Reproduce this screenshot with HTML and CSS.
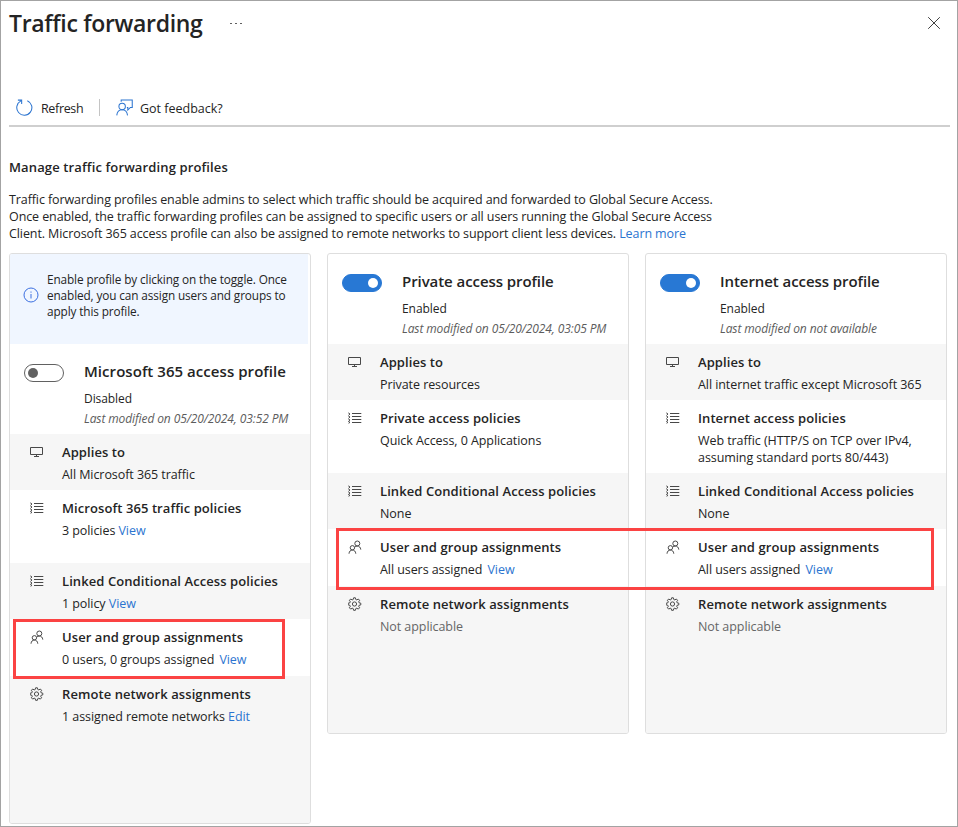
FILE: index.html
```
<!DOCTYPE html>
<html lang="en">
<head>
<meta charset="utf-8">
<title>Traffic forwarding</title>
<link rel="stylesheet" href="styles.css">
</head>
<body>
<svg class="sprite" aria-hidden="true">
  <symbol id="monitor" viewBox="0 0 14 14"><path d="M.5 2.500h12v7H.5zM6.500 10v1.500M4 11.500h5"/></symbol>
  <symbol id="list" viewBox="0 0 14 14"><path d="M4 2.500h9.300M4 5.500h9.300M4 8.500h9.300M4 11.500h9.300M.3 1.900l1.700 1.100L.6 4.200M.3 4.900L2 6 .6 7.200M.3 7.900L2 9 .6 10.200M.3 10.500L2 11.300.6 12.300"/></symbol>
  <symbol id="people" viewBox="0 0 14 14"><circle cx="4.400" cy="7.800" r="2.200"/><circle cx="9.300" cy="3.500" r="2.500"/><path d="M1 13.700c.2-2.300 1.500-3.700 3.400-3.700s3.200 1.400 3.400 3.700M6.800 7.100c.6-.7 1.500-1.100 2.500-1.100 1.900 0 3.300 1.400 3.500 3.600"/></symbol>
  <symbol id="gear" viewBox="0 0 14 14"><circle cx="6.500" cy="7" r="2.100"/><path d="M5.600.8h1.800l.4 1.700 1 .4 1.500-.9 1.300 1.300-.9 1.500.4 1 1.700.4v1.700l-1.700.4-.4 1 .9 1.500-1.300 1.300-1.500-.9-1 .4-.4 1.700H5.600l-.4-1.700-1-.4-1.500.9-1.300-1.300.9-1.500-.4-1-1.700-.4V6.200l1.700-.4.4-1-.9-1.500L2.700 2l1.500.9 1-.4z"/></symbol>
</svg>
<main class="blade">
  <header class="titlebar">
    <h1>Traffic forwarding</h1>
    <span class="more"><i></i><i></i><i></i></span>
    <svg class="close" viewBox="0 0 12 12"><path d="M.2.2l11.600 11.600M11.800.2L.2 11.800"/></svg>
  </header>
  <nav class="toolbar">
    <svg class="tool-icon" viewBox="0 0 18 18"><path d="M5.200 2A8 8 0 1 0 12 1.800M2 1.200h4v4"/></svg>
    <span class="refresh">Refresh</span>
    <span class="divider"></span>
    <svg class="tool-icon" viewBox="0 0 18 18"><circle cx="6.500" cy="8" r="3.400"/><path d="M.8 17.300c.4-3.600 2.600-5.900 5.700-5.900s5.300 2.300 5.700 5.900M5.500 3V1h11.700v8h-2l-2.700 2.700V9h-1"/></svg>
    <span class="feedback">Got feedback?</span>
  </nav>
  <h2>Manage traffic forwarding profiles</h2>
  <p class="intro">Traffic forwarding profiles enable admins to select which traffic should be acquired and forwarded to Global Secure Access.<br>Once enabled, the traffic forwarding profiles can be assigned to specific users or all users running the Global Secure Access<br>Client. Microsoft 365 access profile can also be assigned to remote networks to support client less devices. <a>Learn more</a></p>
  <div class="cards">
    <section class="card tall">
      <div class="banner">
        <svg class="info" viewBox="0 0 16 16"><circle cx="8" cy="8" r="7"/><path d="M8 7v4.500M8 4.500v1.200"/></svg>
        <p>Enable profile by clicking on the toggle. Once<br>enabled, you can assign users and groups to<br>apply this profile.</p>
      </div>
      <div class="profile">
        <span class="toggle"></span>
        <div><h3 class="wide">Microsoft 365 access profile</h3><p class="state">Disabled</p><p class="modified">Last modified on 05/20/2024, 03:52 PM</p></div>
      </div>
      <div class="row shaded"><svg class="icon"><use href="#monitor"/></svg><div><h4>Applies to</h4><p>All Microsoft 365 traffic</p></div></div>
      <div class="row policies"><svg class="icon"><use href="#list"/></svg><div><h4>Microsoft 365 traffic policies</h4><p>3 policies <a>View</a></p></div></div>
      <div class="row shaded"><svg class="icon"><use href="#list"/></svg><div><h4>Linked Conditional Access policies</h4><p>1 policy <a>View</a></p></div></div>
      <div class="row users"><svg class="icon"><use href="#people"/></svg><div><h4>User and group assignments</h4><p>0 users, 0 groups assigned <a class="spaced">View</a></p></div></div>
      <div class="row shaded last"><svg class="icon"><use href="#gear"/></svg><div><h4>Remote network assignments</h4><p>1 assigned remote networks <a>Edit</a></p></div></div>
    </section>
    <section class="card">
      <div class="profile">
        <span class="toggle on"></span>
        <div><h3>Private access profile</h3><p class="state">Enabled</p><p class="modified">Last modified on 05/20/2024, 03:05 PM</p></div>
      </div>
      <div class="row shaded"><svg class="icon"><use href="#monitor"/></svg><div><h4>Applies to</h4><p>Private resources</p></div></div>
      <div class="row policies"><svg class="icon"><use href="#list"/></svg><div><h4>Private access policies</h4><p>Quick Access, 0 Applications</p></div></div>
      <div class="row shaded"><svg class="icon"><use href="#list"/></svg><div><h4>Linked Conditional Access policies</h4><p>None</p></div></div>
      <div class="row users"><svg class="icon"><use href="#people"/></svg><div><h4>User and group assignments</h4><p>All users assigned <a class="spaced">View</a></p></div></div>
      <div class="row shaded last"><svg class="icon"><use href="#gear"/></svg><div><h4>Remote network assignments</h4><p class="muted">Not applicable</p></div></div>
    </section>
    <section class="card">
      <div class="profile">
        <span class="toggle on"></span>
        <div><h3>Internet access profile</h3><p class="state">Enabled</p><p class="modified">Last modified on not available</p></div>
      </div>
      <div class="row shaded"><svg class="icon"><use href="#monitor"/></svg><div><h4>Applies to</h4><p>All internet traffic except Microsoft 365</p></div></div>
      <div class="row policies"><svg class="icon"><use href="#list"/></svg><div><h4>Internet access policies</h4><p>Web traffic (HTTP/S on TCP over IPv4,<br>assuming standard ports 80/443)</p></div></div>
      <div class="row shaded"><svg class="icon"><use href="#list"/></svg><div><h4>Linked Conditional Access policies</h4><p>None</p></div></div>
      <div class="row users"><svg class="icon"><use href="#people"/></svg><div><h4>User and group assignments</h4><p>All users assigned <a class="spaced">View</a></p></div></div>
      <div class="row shaded last"><svg class="icon"><use href="#gear"/></svg><div><h4>Remote network assignments</h4><p class="muted">Not applicable</p></div></div>
    </section>
  </div>
  <div class="callout callout-left"></div>
  <div class="callout callout-right"></div>
</main>
</body>
</html>
```
FILE: styles.css
```
* { box-sizing: border-box; margin: 0; padding: 0; }
body {
  background: #fff;
  color: #242424;
  font-family: "Open Sans", "Noto Sans", sans-serif;
  font-size: 12.5px;
  line-height: 17px;
  letter-spacing: -0.07px;
}
.sprite { display: none; }
.blade {
  position: relative;
  width: 958px;
  height: 827px;
  border: 1px solid #a3a3a3;
  padding: 0 7px 0 8px;
  overflow: hidden;
}
svg { fill: none; stroke: #505050; flex: none; }
a { color: #2b74d0; }
.spaced { margin-left: 2px; }

.titlebar { display: flex; align-items: center; height: 44px; padding-right: 10px; }
h1 { margin-top: -1px; font-size: 23px; line-height: 32px; font-weight: 600; letter-spacing: -0.31px; }
.more { display: flex; gap: 3px; margin-left: 27px; }
.more i { width: 2px; height: 1px; background: #606060; }
.close { width: 12px; height: 12px; margin-left: auto; stroke: #404040; }

.toolbar {
  display: flex;
  align-items: center;
  height: 38px;
  margin-top: 44px;
  padding-left: 7px;
  border-bottom: 2px solid #cfcfcf;
}
.tool-icon { width: 17px; height: 17px; stroke: #2b74d0; stroke-width: 1.1; }
.refresh { margin-left: 8px; padding-top: 2px; width: 58px; letter-spacing: -0.35px; }
.divider { width: 1px; height: 17px; background: #c4c4c4; margin-right: 16px; }
.feedback { margin-left: 7px; padding-top: 2px; letter-spacing: 0; }

h2 { margin-top: 31px; font-size: 13px; line-height: 18px; font-weight: 600; letter-spacing: 0.13px; }
.intro { margin-top: 15px; white-space: nowrap; letter-spacing: -0.095px; }

.cards { display: flex; align-items: flex-start; gap: 16px; margin-top: 11px; }
.card {
  display: flex;
  flex-direction: column;
  width: 302px;
  height: 481px;
  border: 1px solid #dedede;
  border-radius: 3px;
  overflow: hidden;
}
.tall { height: 571px; }
.banner {
  display: flex;
  align-items: center;
  height: 90px;
  margin-right: 2px;
  padding: 0 0 8px 13px;
  background: #f0f6ff;
  font-size: 11.8px;
  line-height: 16px;
  letter-spacing: -0.12px;
}
.info { width: 16px; height: 16px; margin-right: 8px; stroke: #3b6fe0; }
.profile { display: flex; height: 90px; padding: 18px 0 0 14px; white-space: nowrap; }
.toggle {
  display: flex;
  align-items: center;
  width: 40px;
  height: 18px;
  margin: 2px 20px 0 0;
  padding: 0 3px;
  border: 1px solid #616161;
  border-radius: 9px;
}
.toggle::before { content: ""; width: 10px; height: 10px; border-radius: 50%; background: #616161; }
.on { justify-content: flex-end; background: #2878d4; border-color: #2878d4; }
.on::before { background: #fff; }
h3 { font-size: 15px; line-height: 18px; font-weight: 600; letter-spacing: -0.07px; }
.wide { letter-spacing: 0.05px; }
.state { margin-top: 11px; font-size: 12px; line-height: 16px; }
.modified { margin-top: 4px; font-size: 12px; line-height: 16px; font-style: italic; color: #5c5c5c; letter-spacing: -0.11px; }

.row { display: flex; flex: none; height: 56px; padding: 9px 0 0 20px; white-space: nowrap; }
.shaded { background: #f6f6f6; }
.policies { height: 73px; }
.users { height: 57px; }
.last { flex: 1; }
.icon { width: 14px; height: 14px; margin: 2px 18px 0 0; stroke: #484848; stroke-width: 1; }
h4 { font-size: 13px; line-height: 18px; font-weight: 600; letter-spacing: 0.08px; }
.row p { margin-top: 5px; }
.row .muted { color: #666; }

.callout { position: absolute; border: 3px solid #fb4343; }
.callout-left { left: 12px; top: 618px; width: 272px; height: 60px; }
.callout-right { left: 335px; top: 527px; width: 598px; height: 62px; }
```
